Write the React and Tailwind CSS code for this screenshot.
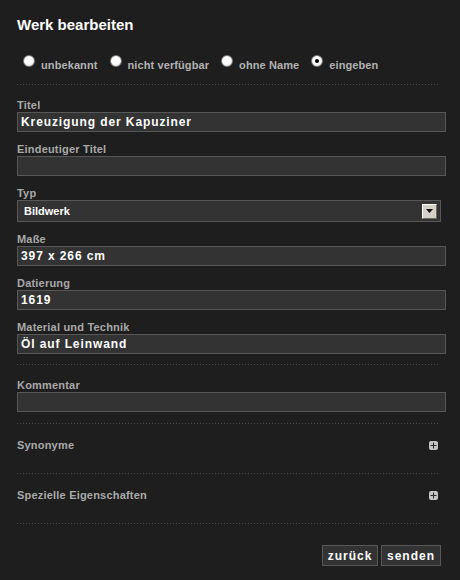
import React from 'react';

const Dots = () => (
    <div className="h-px w-[422px] bg-[linear-gradient(to_right,#4a4a4a_1px,transparent_1px)] bg-[length:3px_1px]" />
);

const Radio = ({ label, checked }) => (
    <div className="flex items-start">
        <span className="w-[12px] h-[12px] rounded-full border border-[#7a7a7a] bg-[radial-gradient(circle_at_40%_35%,#ffffff_45%,#d8d8d8_100%)] flex items-center justify-center">
            {checked && <span className="w-[4px] h-[4px] rounded-full bg-black" />}
        </span>
        <span className="ml-[6px] mt-[4px] text-[11px] leading-[13px] font-bold tracking-[0.1px] text-[#b2b2b2]">{label}</span>
    </div>
);

const Field = ({ label, value, children }) => (
    <div className="mb-[10px]">
        <div className="text-[11px] leading-[14px] font-bold tracking-[0.2px] text-[#a9a9a9]">{label}</div>
        {children || (
            <input
                readOnly
                value={value || ''}
                className="block w-[429px] h-[20px] px-[3px] bg-[#333333] border border-[#575757] text-white text-[12px] font-bold tracking-[0.9px] outline-none"
            />
        )}
    </div>
);

const Plus = () => (
    <span className="w-[9px] h-[9px] rounded-[2px] bg-[#c6c6c6] flex items-center justify-center">
        <svg width="7" height="7" viewBox="0 0 7 7">
            <path d="M3 0.5h1v6h-1z M0.5 3h6v1h-6z" fill="#2a2a2a" />
        </svg>
    </span>
);

const Section = ({ title }) => (
    <div>
        <div className="flex items-center justify-between w-[422px] pt-[14px] pb-[21px]">
            <span className="text-[11px] leading-[14px] font-bold tracking-[0.2px] text-[#a9a9a9]">{title}</span>
            <span className="mr-[1px]"><Plus /></span>
        </div>
        <Dots />
    </div>
);

export default function App() {
    return (
        <div className="w-[460px] h-[580px] bg-[#1e1e1e] pl-[17px] pt-[16px] font-['Liberation_Sans',Arial,sans-serif] overflow-hidden">
            <h2 className="text-[15px] leading-[18px] font-bold text-white">Werk bearbeiten</h2>

            {/* status radios */}
            <div className="flex gap-[12px] mt-[21px] ml-[6px]">
                <Radio label="unbekannt" />
                <Radio label="nicht verfügbar" />
                <Radio label="ohne Name" />
                <Radio label="eingeben" checked />
            </div>

            <div className="mt-[12px] mb-[13px]"><Dots /></div>

            <Field label="Titel" value="Kreuzigung der Kapuziner" />
            <Field label="Eindeutiger Titel" />
            <Field label="Typ">
                <div className="flex items-center justify-between w-[424px] h-[22px] bg-[#333333] border border-[#575757] pl-[6px] pr-[3px]">
                    <span className="text-[11px] font-bold text-white">Bildwerk</span>
                    <span className="w-[15px] h-[15px] bg-[#d4d0c8] border border-t-white border-l-white border-r-[#6b6b6b] border-b-[#6b6b6b] flex items-center justify-center">
                        <svg width="7" height="4" viewBox="0 0 7 4">
                            <path d="M0 0h7l-3.5 4z" fill="#111" />
                        </svg>
                    </span>
                </div>
            </Field>
            <Field label="Maße" value="397 x 266 cm" />
            <Field label="Datierung" value="1619" />
            <Field label="Material und Technik" value="Öl auf Leinwand" />

            <div className="mt-[1px]"><Dots /></div>

            <div className="mt-[13px]">
                <Field label="Kommentar" />
            </div>
            <div className="-mt-[10px] pt-[11px]"><Dots /></div>

            <Section title="Synonyme" />
            <Section title="Spezielle Eigenschaften" />

            <div className="flex justify-end gap-[3px] w-[424px] mt-[21px]">
                <button className="h-[21px] w-[56px] bg-[#333333] border border-[#575757] text-white text-[12px] font-bold tracking-[1px]">zurück</button>
                <button className="h-[21px] w-[60px] bg-[#333333] border border-[#575757] text-white text-[12px] font-bold tracking-[1px]">senden</button>
            </div>
        </div>
    );
}
